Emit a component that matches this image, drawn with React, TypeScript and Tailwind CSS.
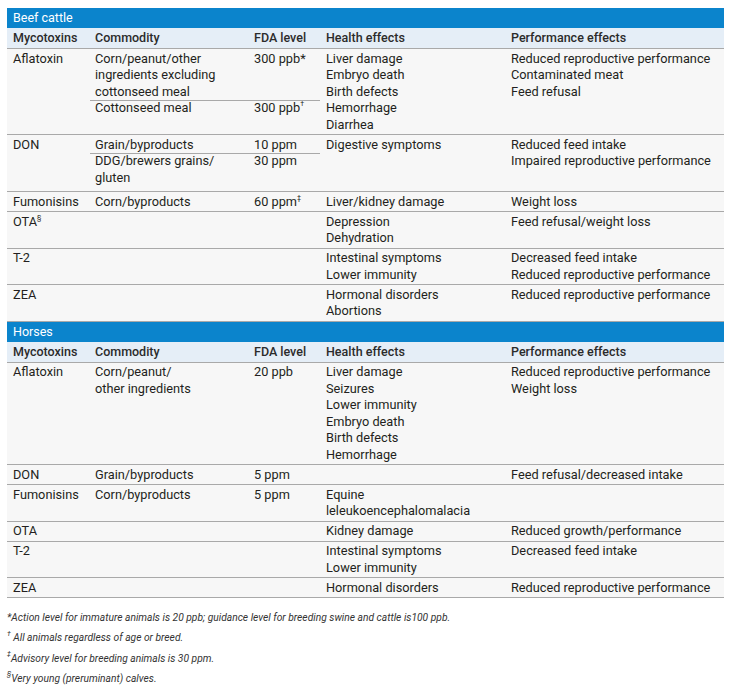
import type { ReactNode } from "react";

type Sub = { commodity: string[]; level: ReactNode };
type Row = {
  toxin: ReactNode;
  subs: Sub[];
  health: string[];
  perf: string[];
};

const Sup = ({ children }: { children: ReactNode }) => (
  <sup className="relative -top-[1px] align-super text-[7px] leading-none">
    {children}
  </sup>
);

const beefRows: Row[] = [
  {
    toxin: "Aflatoxin",
    subs: [
      {
        commodity: ["Corn/peanut/other", "ingredients excluding", "cottonseed meal"],
        level: "300 ppb*",
      },
      {
        commodity: ["Cottonseed meal"],
        level: (
          <>
            300 ppb<Sup>†</Sup>
          </>
        ),
      },
    ],
    health: ["Liver damage", "Embryo death", "Birth defects", "Hemorrhage", "Diarrhea"],
    perf: ["Reduced reproductive performance", "Contaminated meat", "Feed refusal"],
  },
  {
    toxin: "DON",
    subs: [
      { commodity: ["Grain/byproducts"], level: "10 ppm" },
      { commodity: ["DDG/brewers grains/", "gluten"], level: "30 ppm" },
    ],
    health: ["Digestive symptoms"],
    perf: ["Reduced feed intake", "Impaired reproductive performance"],
  },
  {
    toxin: "Fumonisins",
    subs: [
      {
        commodity: ["Corn/byproducts"],
        level: (
          <>
            60 ppm<Sup>‡</Sup>
          </>
        ),
      },
    ],
    health: ["Liver/kidney damage"],
    perf: ["Weight loss"],
  },
  {
    toxin: (
      <>
        OTA<Sup>§</Sup>
      </>
    ),
    subs: [],
    health: ["Depression", "Dehydration"],
    perf: ["Feed refusal/weight loss"],
  },
  {
    toxin: "T-2",
    subs: [],
    health: ["Intestinal symptoms", "Lower immunity"],
    perf: ["Decreased feed intake", "Reduced reproductive performance"],
  },
  {
    toxin: "ZEA",
    subs: [],
    health: ["Hormonal disorders", "Abortions"],
    perf: ["Reduced reproductive performance"],
  },
];

const horseRows: Row[] = [
  {
    toxin: "Aflatoxin",
    subs: [{ commodity: ["Corn/peanut/", "other ingredients"], level: "20 ppb" }],
    health: [
      "Liver damage",
      "Seizures",
      "Lower immunity",
      "Embryo death",
      "Birth defects",
      "Hemorrhage",
    ],
    perf: ["Reduced reproductive performance", "Weight loss"],
  },
  {
    toxin: "DON",
    subs: [{ commodity: ["Grain/byproducts"], level: "5 ppm" }],
    health: [],
    perf: ["Feed refusal/decreased intake"],
  },
  {
    toxin: "Fumonisins",
    subs: [{ commodity: ["Corn/byproducts"], level: "5 ppm" }],
    health: ["Equine", "leleukoencephalomalacia"],
    perf: [],
  },
  {
    toxin: "OTA",
    subs: [],
    health: ["Kidney damage"],
    perf: ["Reduced growth/performance"],
  },
  {
    toxin: "T-2",
    subs: [],
    health: ["Intestinal symptoms", "Lower immunity"],
    perf: ["Decreased feed intake"],
  },
  {
    toxin: "ZEA",
    subs: [],
    health: ["Hormonal disorders"],
    perf: ["Reduced reproductive performance"],
  },
];

const cols = "grid grid-cols-[83px_158px_72px_185px_219px]";

const Lines = ({ lines }: { lines: string[] }) => (
  <>
    {lines.map((l) => (
      <div key={l} className="whitespace-nowrap">
        {l}
      </div>
    ))}
  </>
);

const TableRow = ({ row }: { row: Row }) => (
  <div className={`${cols} border-b border-[#a9a9a9] pt-[1.75px] pb-[0.75px]`}>
    <div className="pl-[6px]">{row.toxin}</div>
    <div className="col-span-2 flex flex-col">
      {row.subs.map((sub, i) => (
        <div
          key={i}
          className={
            i < row.subs.length - 1
              ? "grid grid-cols-[158px_72px] border-b border-[#a9a9a9] -mb-[1px]"
              : i > 0
                ? "grid grid-cols-[158px_72px] pb-[4px]"
                : "grid grid-cols-[158px_72px]"
          }
        >
          <div className="pl-[5px]">
            <Lines lines={sub.commodity} />
          </div>
          <div className="whitespace-nowrap pl-[6px]">{sub.level}</div>
        </div>
      ))}
    </div>
    <div className="pl-[6px]">
      <Lines lines={row.health} />
    </div>
    <div className="pl-[6px]">
      <Lines lines={row.perf} />
    </div>
  </div>
);

const Section = ({ title, rows }: { title: string; rows: Row[] }) => (
  <div>
    <div className="h-[20px] bg-[#0b84cc] pl-[6px] text-[12.5px] leading-[20px] text-white">
      {title}
    </div>
    <div
      className={`${cols} border-b border-[#a9a9a9] bg-[#e5eef7] text-[12.5px] font-medium leading-[20px] text-[#2b2b2b]`}
    >
      <div className="pl-[6px]">Mycotoxins</div>
      <div className="pl-[5px]">Commodity</div>
      <div className="pl-[6px]">FDA level</div>
      <div className="pl-[6px]">Health effects</div>
      <div className="pl-[6px]">Performance effects</div>
    </div>
    {rows.map((r, i) => (
      <TableRow key={i} row={r} />
    ))}
  </div>
);

export default function App() {
  return (
    <div
      className="min-h-[689px] w-[733px] bg-white pt-[8px] text-[#231f20]"
      style={{ fontFamily: "Roboto, 'Liberation Sans', sans-serif" }}
    >
      <div className="ml-[7px] w-[717px] bg-[#f7f7f7] text-[12.75px] leading-[16.5px]">
        <Section title="Beef cattle" rows={beefRows} />
        <Section title="Horses" rows={horseRows} />
      </div>
      <div className="ml-[7px] mt-[13px] flex flex-col gap-[7.3px] text-[10.25px] italic leading-[13px] text-[#333]">
        <p>
          *Action level for immature animals is 20 ppb; guidance level for breeding swine and
          cattle is100 ppb.
        </p>
        <p>
          <Sup>†</Sup> All animals regardless of age or breed.
        </p>
        <p>
          <Sup>‡</Sup>Advisory level for breeding animals is 30 ppm.
        </p>
        <p>
          <Sup>§</Sup>Very young (preruminant) calves.
        </p>
      </div>
    </div>
  );
}
